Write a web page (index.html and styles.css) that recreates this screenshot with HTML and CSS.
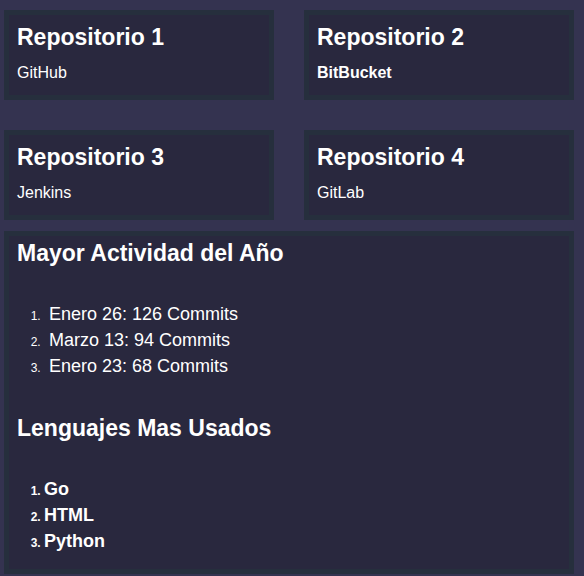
FILE: index.html
```html
<!DOCTYPE html>
<html lang="es">
<head>
<meta charset="utf-8">
<title>Repositorios</title>
<link rel="stylesheet" href="styles.css">
</head>
<body>
<div class="page">
  <div class="repos">
    <div class="card repo">
      <h2 class="title">Repositorio 1</h2>
      <p class="source">GitHub</p>
    </div>
    <div class="card repo">
      <h2 class="title">Repositorio 2</h2>
      <p class="source source-bold">BitBucket</p>
    </div>
    <div class="card repo">
      <h2 class="title">Repositorio 3</h2>
      <p class="source">Jenkins</p>
    </div>
    <div class="card repo">
      <h2 class="title">Repositorio 4</h2>
      <p class="source">GitLab</p>
    </div>
  </div>
  <div class="card stats">
    <h2 class="title stats-title">Mayor Actividad del Año</h2>
    <ol class="list activity">
      <li>&nbsp;Enero 26: 126 Commits</li>
      <li>&nbsp;Marzo 13: 94 Commits</li>
      <li>&nbsp;Enero 23: 68 Commits</li>
    </ol>
    <h2 class="title stats-title">Lenguajes Mas Usados</h2>
    <ol class="list langs">
      <li>Go</li>
      <li>HTML</li>
      <li>Python</li>
    </ol>
  </div>
</div>
</body>
</html>
```

FILE: styles.css
```css
html, body {
  margin: 0;
  padding: 0;
}

body {
  background: #343350;
  font-family: "Liberation Sans", Arial, sans-serif;
  color: #ffffff;
  height: 576px;
  overflow: hidden;
}

.page {
  padding: 10px 10px 0 4px;
  display: flex;
  flex-direction: column;
  gap: 11px;
}

.repos {
  display: grid;
  grid-template-columns: 270px 270px;
  column-gap: 30px;
  row-gap: 30px;
}

.card {
  background: #29283e;
  border: 5px solid #262f3d;
}

.repo {
  height: 90px;
  box-sizing: border-box;
  padding: 9px 8px 0;
}

.title {
  margin: 0 0 13px;
  font-size: 23px;
  font-weight: bold;
  line-height: normal;
}

.source {
  margin: 0;
  font-size: 16px;
  line-height: normal;
}

.source-bold {
  font-weight: bold;
}

.stats {
  height: 343px;
  box-sizing: border-box;
  padding: 4px 8px 0;
}

.stats-title {
  margin-bottom: 34px;
}

.list {
  margin: 0 0 36px;
  padding-left: 27px;
}

.list li {
  font-size: 18px;
  line-height: 26px;
}

.list li::marker {
  font-size: 12px;
}

.langs li {
  font-weight: bold;
}
```
